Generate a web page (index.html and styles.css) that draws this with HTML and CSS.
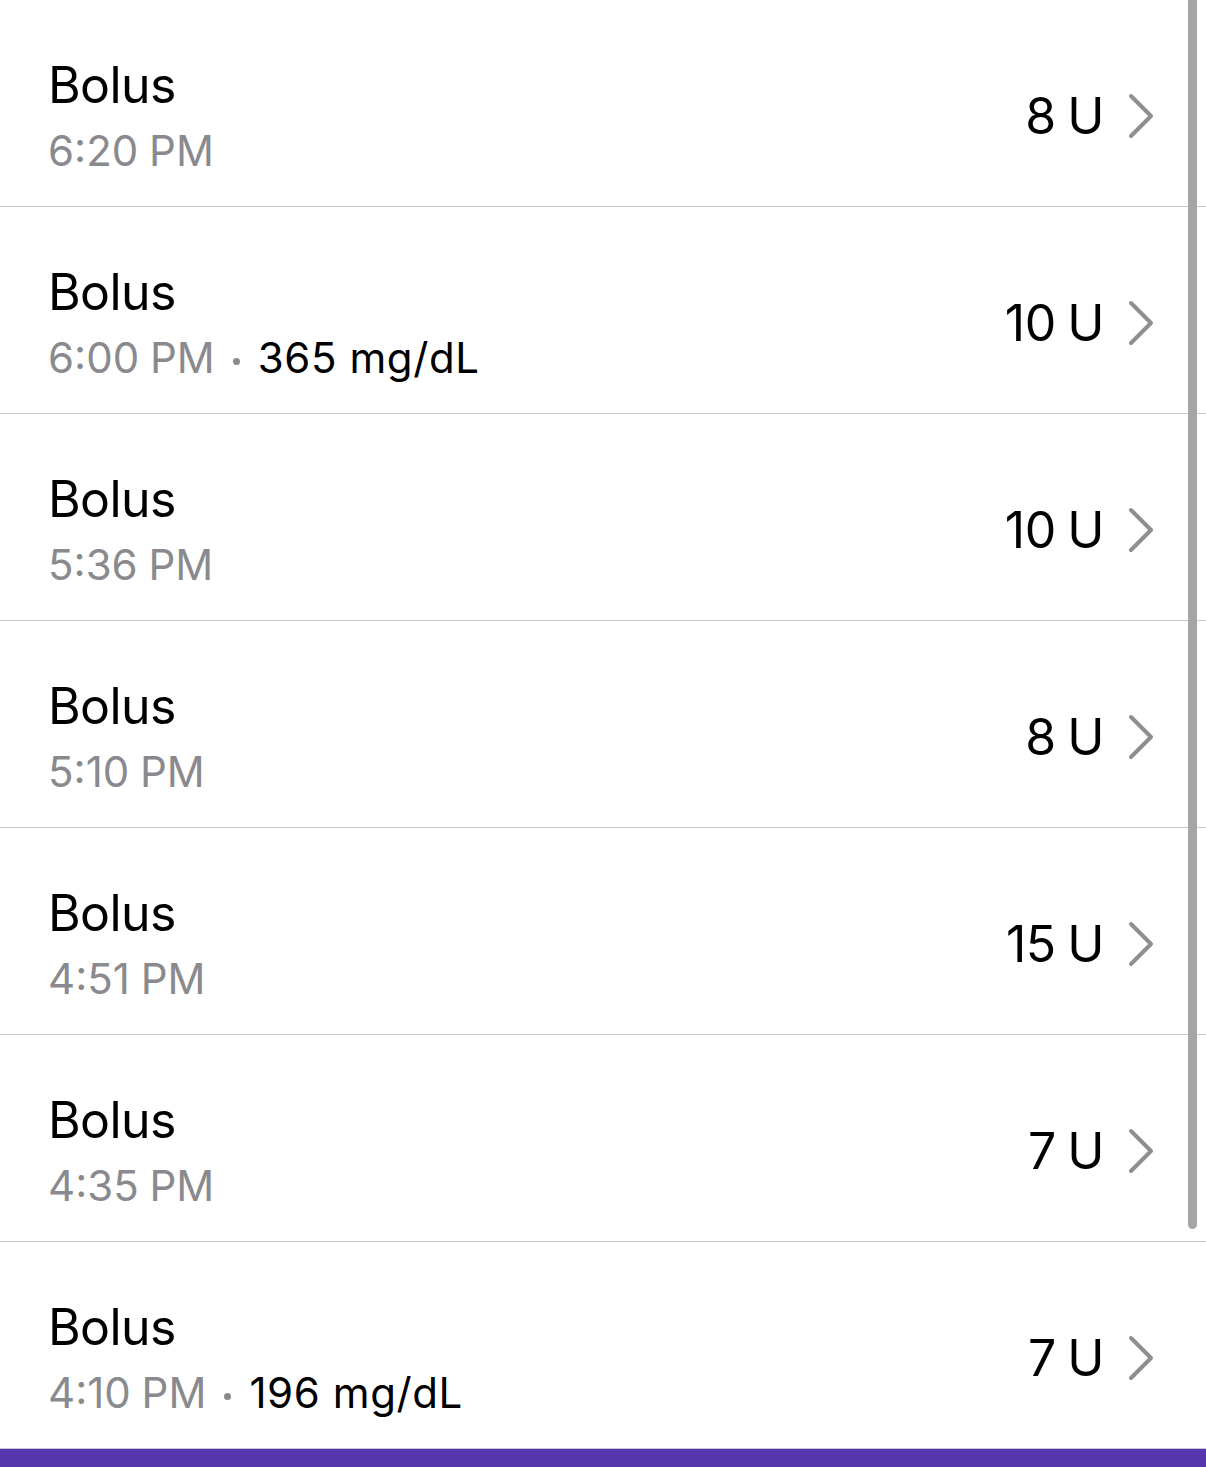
FILE: index.html
```html
<!DOCTYPE html>
<html>
<head>
<meta charset="utf-8">
<link rel="stylesheet" href="styles.css">
</head>
<body>
<div class="screen">
  <ul class="list">
    <li class="row">
      <div class="info"><div class="title">Bolus</div><div class="sub"><span class="time">6:20 PM</span></div></div>
      <div class="value"><span>8 U</span><svg class="chev" viewBox="0 0 26 46"><polyline points="3,3 23,23 3,43"/></svg></div>
    </li>
    <li class="row">
      <div class="info"><div class="title">Bolus</div><div class="sub"><span class="time">6:00 PM</span><span class="dot"></span><span class="bg">365 mg/dL</span></div></div>
      <div class="value"><span>10 U</span><svg class="chev" viewBox="0 0 26 46"><polyline points="3,3 23,23 3,43"/></svg></div>
    </li>
    <li class="row">
      <div class="info"><div class="title">Bolus</div><div class="sub"><span class="time">5:36 PM</span></div></div>
      <div class="value"><span>10 U</span><svg class="chev" viewBox="0 0 26 46"><polyline points="3,3 23,23 3,43"/></svg></div>
    </li>
    <li class="row">
      <div class="info"><div class="title">Bolus</div><div class="sub"><span class="time">5:10 PM</span></div></div>
      <div class="value"><span>8 U</span><svg class="chev" viewBox="0 0 26 46"><polyline points="3,3 23,23 3,43"/></svg></div>
    </li>
    <li class="row">
      <div class="info"><div class="title">Bolus</div><div class="sub"><span class="time">4:51 PM</span></div></div>
      <div class="value"><span>15 U</span><svg class="chev" viewBox="0 0 26 46"><polyline points="3,3 23,23 3,43"/></svg></div>
    </li>
    <li class="row">
      <div class="info"><div class="title">Bolus</div><div class="sub"><span class="time">4:35 PM</span></div></div>
      <div class="value"><span>7 U</span><svg class="chev" viewBox="0 0 26 46"><polyline points="3,3 23,23 3,43"/></svg></div>
    </li>
    <li class="row last">
      <div class="info"><div class="title">Bolus</div><div class="sub"><span class="time">4:10 PM</span><span class="dot"></span><span class="bg">196 mg/dL</span></div></div>
      <div class="value"><span>7 U</span><svg class="chev" viewBox="0 0 26 46"><polyline points="3,3 23,23 3,43"/></svg></div>
    </li>
  </ul>
  <div class="bar"></div>
  <div class="scroll"></div>
</div>
</body>
</html>
```
FILE: styles.css
```css
html, body {
  margin: 0;
  padding: 0;
  background: #fff;
}
body {
  font-family: Inter, "Liberation Sans", sans-serif;
  color: #000;
}
.screen {
  position: relative;
  width: 1206px;
  height: 1467px;
  overflow: hidden;
  display: flex;
  flex-direction: column;
}
.list {
  list-style: none;
  margin: 0;
  padding: 0;
  flex: 1;
}
.row {
  box-sizing: content-box;
  border-bottom: 1px solid #c8c8ca;
  display: flex;
  align-items: center;
  justify-content: space-between;
  padding: 26px 52px 0 48px;
  height: 180px;
}
.row.last {
  border-bottom: none;
}
.title {
  font-size: 50px;
  line-height: 60px;
  letter-spacing: -0.6px;
}
.sub {
  margin-top: 10px;
  font-size: 42px;
  line-height: 52px;
  display: flex;
  align-items: center;
}
.time {
  color: #8a8a8e;
  word-spacing: -1px;
}
.dot {
  width: 7px;
  height: 7px;
  border-radius: 50%;
  background: #8a8a8e;
  margin: 6px 18px 0 18px;
}
.bg {
  color: #000;
  letter-spacing: 0.6px;
}
.value {
  display: flex;
  align-items: center;
  font-size: 50px;
  line-height: 60px;
  letter-spacing: -0.5px;
  word-spacing: -2px;
}
.chev {
  width: 26px;
  height: 46px;
  margin-left: 24px;
  fill: none;
  stroke: #8e8e93;
  stroke-width: 4;
  stroke-linecap: round;
  stroke-linejoin: round;
}
.bar {
  height: 19px;
  background: #5636ae;
  border-top: 1px solid #c9c6d6;
  flex: none;
}
.scroll {
  position: absolute;
  top: 0;
  left: 1188px;
  width: 9px;
  height: 1229px;
  border-radius: 0 0 5px 5px;
  background: #a6a6a6;
}
```
